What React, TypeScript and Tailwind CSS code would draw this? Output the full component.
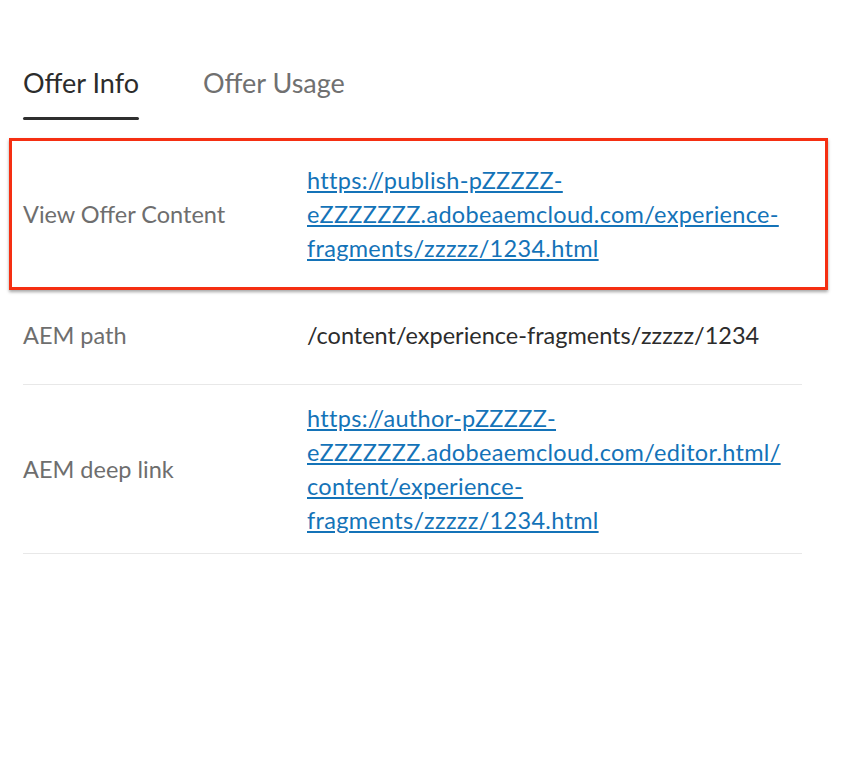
export default function App() {
  return (
    <div className="min-h-[766px] w-[850px] bg-white font-['Lato',sans-serif]">
      <div className="flex gap-[64px] px-[23px] pt-[65px]">
        <div className="flex flex-col">
          <span className="text-[27px] leading-[36px] text-[#2c2c2c]">Offer Info</span>
          <div className="mt-[16px] h-[3px] rounded-sm bg-[#2f2f2f]" />
        </div>
        <span className="text-[27px] leading-[36px] text-[#707070]">Offer Usage</span>
      </div>

      <div className="mx-[9px] mt-[18px] w-[819px] border-[3px] border-[#f52f12] shadow-[0_2px_3px_rgba(0,0,0,0.35)]">
        <div className="flex items-center py-[22px] pl-[11px] text-[23.5px] leading-[34px]">
          <div className="w-[284px] text-[#6e6e6e]">View Offer Content</div>
          <a href="#" className="text-[#1473b8] tracking-[0.3px] underline underline-offset-2">
            https://publish-pZZZZZ-
            <br />
            eZZZZZZZ.adobeaemcloud.com/experience-
            <br />
            fragments/zzzzz/1234.html
          </a>
        </div>
      </div>

      <div className="mx-[23px] w-[779px] text-[23.5px] leading-[34px]">
        <div className="flex items-center border-b border-[#e8e8e8] pt-[28px] pb-[32px]">
          <div className="w-[284px] text-[#6e6e6e]">AEM path</div>
          <div className="text-[#2c2c2c]">/content/experience-fragments/zzzzz/1234</div>
        </div>
        <div className="flex items-center border-b border-[#e8e8e8] py-[16px]">
          <div className="w-[284px] text-[#6e6e6e]">AEM deep link</div>
          <a href="#" className="text-[#1473b8] tracking-[0.3px] underline underline-offset-2">
            https://author-pZZZZZ-
            <br />
            eZZZZZZZ.adobeaemcloud.com/editor.html/
            <br />
            content/experience-
            <br />
            fragments/zzzzz/1234.html
          </a>
        </div>
      </div>
    </div>
  );
}
